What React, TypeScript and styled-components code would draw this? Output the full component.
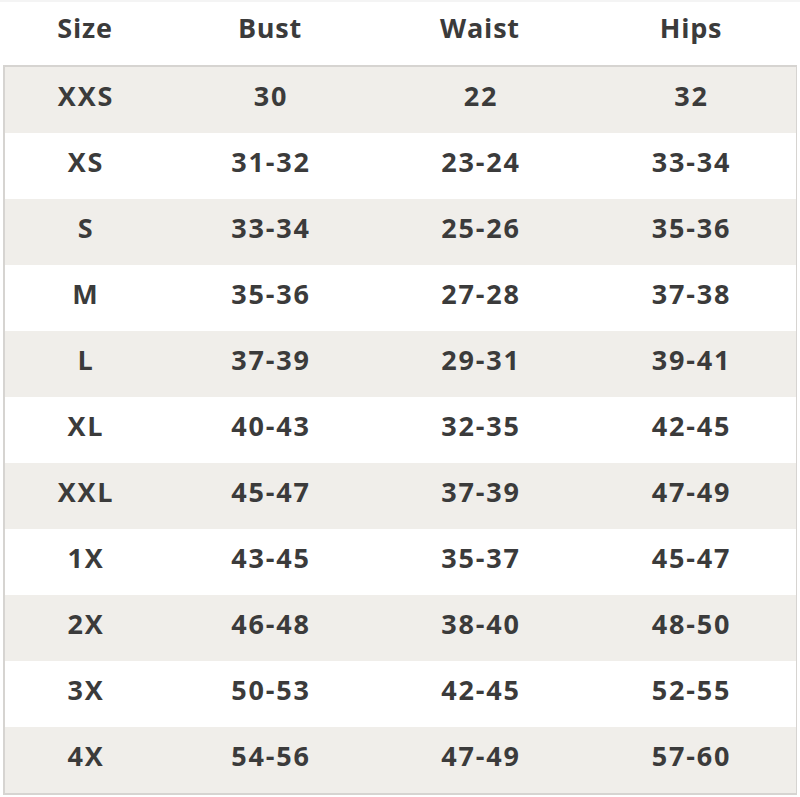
import React from 'react'
import styled, { createGlobalStyle } from 'styled-components'

const GlobalStyle = createGlobalStyle`
  html, body {
    margin: 0;
    padding: 0;
    background: #ffffff;
  }
  body {
    font-family: 'Open Sans', 'Noto Sans', Arial, sans-serif;
    color: #3b3b3b;
  }
`

const Page = styled.div`
  width: 800px;
  height: 797px;
  box-sizing: border-box;
  border-top: 2px solid #f4f4f4;
  padding: 0 3px;
  overflow: hidden;
`

const Row = styled.div<{ $striped?: boolean }>`
  display: grid;
  grid-template-columns: 162px 208px 212px 1fr;
  align-items: center;
  height: 66px;
  background: ${p => (p.$striped ? '#f0eeea' : '#ffffff')};
`

const HeadRow = styled(Row)`
  height: 63px;
  padding: 0 1px;
`

const Table = styled.div`
  border: 2px solid #d6d4d1;
  border-right-width: 1px;
`

const Cell = styled.div`
  text-align: center;
  font-size: 27px;
  font-weight: 700;
  letter-spacing: 1.8px;
  line-height: 1;
  padding-bottom: 10px;
`

const HeadCell = styled(Cell)`
  letter-spacing: 0.8px;
  padding-bottom: 12px;
`

const rows = [
  ['XXS', '30', '22', '32'],
  ['XS', '31-32', '23-24', '33-34'],
  ['S', '33-34', '25-26', '35-36'],
  ['M', '35-36', '27-28', '37-38'],
  ['L', '37-39', '29-31', '39-41'],
  ['XL', '40-43', '32-35', '42-45'],
  ['XXL', '45-47', '37-39', '47-49'],
  ['1X', '43-45', '35-37', '45-47'],
  ['2X', '46-48', '38-40', '48-50'],
  ['3X', '50-53', '42-45', '52-55'],
  ['4X', '54-56', '47-49', '57-60'],
]

const App = () => (
  <Page>
    <GlobalStyle />
    <HeadRow>
      <HeadCell>Size</HeadCell>
      <HeadCell>Bust</HeadCell>
      <HeadCell>Waist</HeadCell>
      <HeadCell>Hips</HeadCell>
    </HeadRow>
    <Table>
      {rows.map((r, i) => (
        <Row key={r[0]} $striped={i % 2 === 0}>
          {r.map((v, j) => (
            <Cell key={j}>{v}</Cell>
          ))}
        </Row>
      ))}
    </Table>
  </Page>
)

export default App
